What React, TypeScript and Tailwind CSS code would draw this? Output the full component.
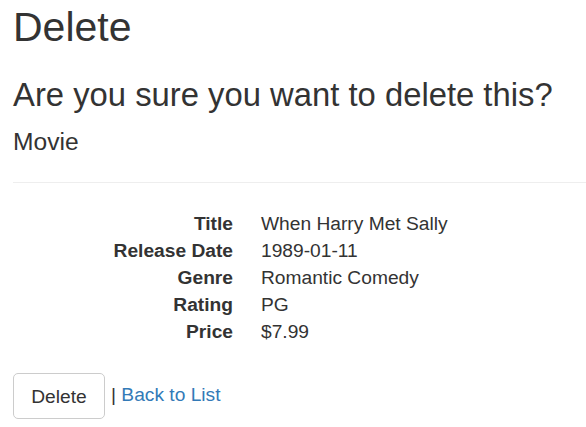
const movie = [
  { label: "Title", value: "When Harry Met Sally" },
  { label: "Release Date", value: "1989-01-11" },
  { label: "Genre", value: "Romantic Comedy" },
  { label: "Rating", value: "PG" },
  { label: "Price", value: "$7.99" },
];

export default function App() {
  return (
    <div className="min-h-screen bg-white pl-[13px] text-[#333] font-['Liberation_Sans',Arial,sans-serif] text-[19.2px] leading-[27px]">
      <h2 className="mt-[5px] text-[41px] leading-[44px] font-normal">Delete</h2>
      <h3 className="mt-[28px] text-[32.8px] leading-[35px] font-normal">
        Are you sure you want to delete this?
      </h3>
      <div>
        <h4 className="mt-[17px] text-[24.6px] leading-[26px] font-normal">Movie</h4>
        <hr className="mt-[27px] border-0 border-t border-[#eee]" />
        {/* dl-horizontal */}
        <dl className="mt-[27px] grid grid-cols-[220px_1fr] gap-x-[28px]">
          {movie.map((row) => (
            <div key={row.label} className="contents">
              <dt className="text-right font-bold">{row.label}</dt>
              <dd>{row.value}</dd>
            </div>
          ))}
        </dl>
      </div>
      <form className="mt-[28px] flex items-center">
        <button
          type="button"
          className="h-[46px] w-[92px] border border-[#ccc] rounded-[5px] bg-white text-[#333]"
        >
          Delete
        </button>
        <span className="ml-[6px] -mt-[3px]">
          |{" "}
          <a href="#" className="text-[#337ab7]">
            Back to List
          </a>
        </span>
      </form>
    </div>
  );
}
